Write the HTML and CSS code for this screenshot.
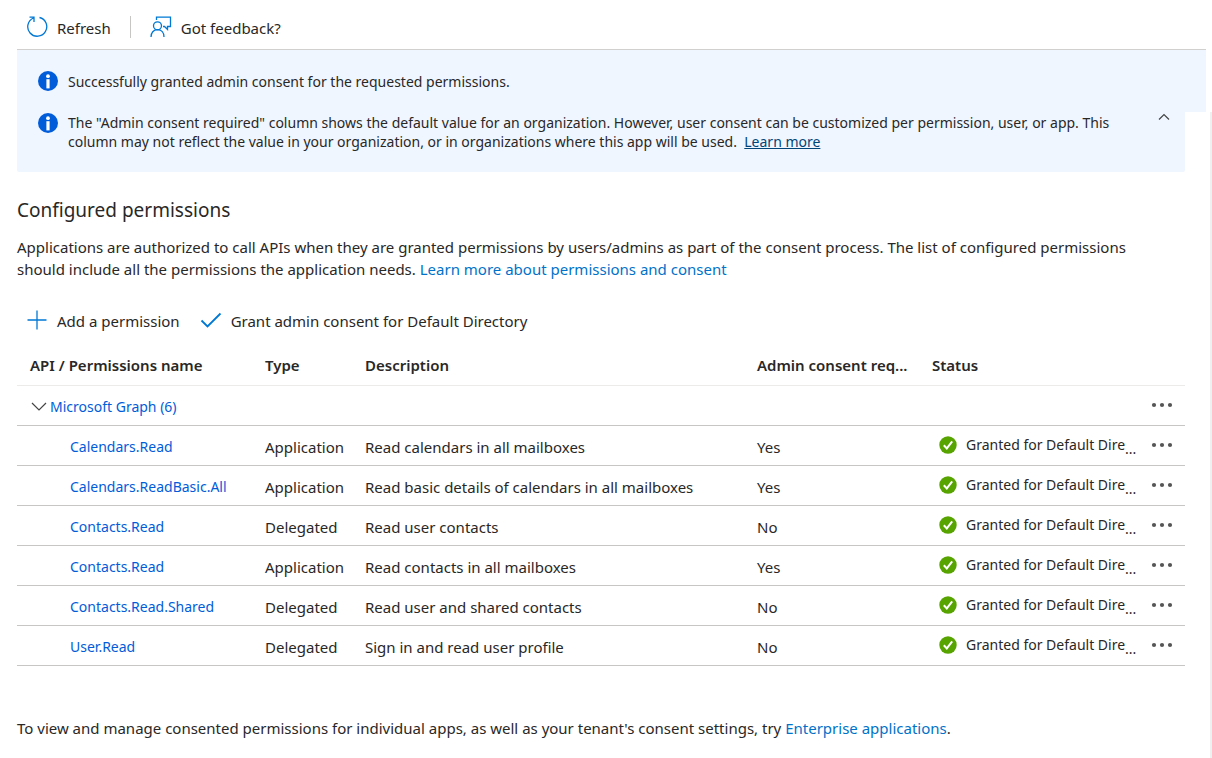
FILE: index.html
```html
<!DOCTYPE html>
<html lang="en">
<head>
  <meta charset="UTF-8">
  <meta name="viewport" content="width=device-width, initial-scale=1.0">
  <title>API permissions</title>
  <link rel="stylesheet" href="styles.css">
</head>
<body>
  <!-- Shared icons -->
  <svg class="sprite" aria-hidden="true">
    <symbol id="icon-info" viewBox="0 0 20 20">
      <circle cx="10" cy="10" r="10" fill="#015cda"/>
      <circle cx="10" cy="5.2" r="1.9" fill="#fff"/>
      <rect x="8.4" y="8.2" width="3.2" height="9.2" fill="#fff"/>
    </symbol>
    <symbol id="icon-ok" viewBox="0 0 18 18">
      <circle cx="9" cy="9" r="8.700" fill="#57a300"/>
      <path d="M4.8 9.2l3 3.2 5.4-7" fill="none" stroke="#fff" stroke-width="2"/>
    </symbol>
    <symbol id="icon-more" viewBox="0 0 22 6">
      <circle cx="3" cy="3" r="2.1" fill="#555"/>
      <circle cx="11" cy="3" r="2.1" fill="#555"/>
      <circle cx="19" cy="3" r="2.1" fill="#555"/>
    </symbol>
  </svg>

  <header class="toolbar">
    <button class="command" type="button">
      <svg class="icon" viewBox="0 0 22 22"><path d="M13.500 1.500A9.500 9.500 0 1 1 7.500 2M3.500 1.200h4.500v4.800" fill="none" stroke="#0078d4" stroke-width="1.3"/></svg>
      <span>Refresh</span>
    </button>
    <span class="divider"></span>
    <button class="command" type="button">
      <svg class="icon" viewBox="0 0 22 22"><path d="M6.5 4V1.2h14v9.3h-3v3l-3-3h-1.5M1 21c0-4.300 2.500-7.300 6.500-7.300s6.500 3 6.500 7.300" fill="none" stroke="#0078d4" stroke-width="1.3"/><circle cx="7.500" cy="9.800" r="4" fill="none" stroke="#0078d4" stroke-width="1.3"/></svg>
      <span>Got feedback?</span>
    </button>
  </header>

  <div class="notice notice-top">
    <svg class="info"><use href="#icon-info"/></svg>
    <p>Successfully granted admin consent for the requested permissions.</p>
  </div>

  <main class="content">
    <div class="notice notice-column">
      <svg class="info"><use href="#icon-info"/></svg>
      <p>The "Admin consent required" column shows the default value for an organization. However, user consent can be customized per permission, user, or app. This column may not reflect the value in your organization, or in organizations where this app will be used. &nbsp;<a href="#">Learn more</a></p>
      <button class="collapse" type="button" aria-label="Collapse">
        <svg width="12" height="8" viewBox="0 0 12 8"><path d="M1 6.500l5-5 5 5" fill="none" stroke="#444" stroke-width="1.200"/></svg>
      </button>
    </div>

    <h2>Configured permissions</h2>
    <p class="intro">Applications are authorized to call APIs when they are granted permissions by users/admins as part of the consent process. The list of configured permissions should include all the permissions the application needs. <a href="#">Learn more about permissions and consent</a></p>

    <div class="actions">
      <button class="command" type="button">
        <svg class="icon" viewBox="0 0 22 22"><path d="M11 1.500v19M1.500 11h19" fill="none" stroke="#0078d4" stroke-width="1.300"/></svg>
        <span>Add a permission</span>
      </button>
      <button class="command" type="button">
        <svg class="icon" viewBox="0 0 22 22"><path d="M1.500 11.500l6 6L20.500 4.500" fill="none" stroke="#0078d4" stroke-width="1.800"/></svg>
        <span>Grant admin consent for Default Directory</span>
      </button>
    </div>

    <table class="permissions">
      <colgroup>
        <col class="col-name">
        <col class="col-type">
        <col>
        <col class="col-admin">
        <col class="col-status">
        <col class="col-more">
      </colgroup>
      <thead>
        <tr>
          <th>API / Permissions name</th>
          <th>Type</th>
          <th>Description</th>
          <th>Admin consent req...</th>
          <th>Status</th>
          <th></th>
        </tr>
      </thead>
      <tbody>
        <tr>
          <td class="api" colspan="5">
            <div><svg width="16" height="10" viewBox="0 0 16 10"><path d="M1 1l7 7 7-7" fill="none" stroke="#444" stroke-width="1.200"/></svg><a href="#">Microsoft Graph (6)</a></div>
          </td>
          <td class="more"><button type="button" aria-label="More"><svg><use href="#icon-more"/></svg></button></td>
        </tr>
        <tr>
          <td class="name"><a href="#">Calendars.Read</a></td>
          <td>Application</td>
          <td>Read calendars in all mailboxes</td>
          <td>Yes</td>
          <td class="status"><div><svg><use href="#icon-ok"/></svg>Granted for Default Dire<span>...</span></div></td>
          <td class="more"><button type="button" aria-label="More"><svg><use href="#icon-more"/></svg></button></td>
        </tr>
        <tr>
          <td class="name"><a href="#">Calendars.ReadBasic.All</a></td>
          <td>Application</td>
          <td>Read basic details of calendars in all mailboxes</td>
          <td>Yes</td>
          <td class="status"><div><svg><use href="#icon-ok"/></svg>Granted for Default Dire<span>...</span></div></td>
          <td class="more"><button type="button" aria-label="More"><svg><use href="#icon-more"/></svg></button></td>
        </tr>
        <tr>
          <td class="name"><a href="#">Contacts.Read</a></td>
          <td>Delegated</td>
          <td>Read user contacts</td>
          <td>No</td>
          <td class="status"><div><svg><use href="#icon-ok"/></svg>Granted for Default Dire<span>...</span></div></td>
          <td class="more"><button type="button" aria-label="More"><svg><use href="#icon-more"/></svg></button></td>
        </tr>
        <tr>
          <td class="name"><a href="#">Contacts.Read</a></td>
          <td>Application</td>
          <td>Read contacts in all mailboxes</td>
          <td>Yes</td>
          <td class="status"><div><svg><use href="#icon-ok"/></svg>Granted for Default Dire<span>...</span></div></td>
          <td class="more"><button type="button" aria-label="More"><svg><use href="#icon-more"/></svg></button></td>
        </tr>
        <tr>
          <td class="name"><a href="#">Contacts.Read.Shared</a></td>
          <td>Delegated</td>
          <td>Read user and shared contacts</td>
          <td>No</td>
          <td class="status"><div><svg><use href="#icon-ok"/></svg>Granted for Default Dire<span>...</span></div></td>
          <td class="more"><button type="button" aria-label="More"><svg><use href="#icon-more"/></svg></button></td>
        </tr>
        <tr>
          <td class="name"><a href="#">User.Read</a></td>
          <td>Delegated</td>
          <td>Sign in and read user profile</td>
          <td>No</td>
          <td class="status"><div><svg><use href="#icon-ok"/></svg>Granted for Default Dire<span>...</span></div></td>
          <td class="more"><button type="button" aria-label="More"><svg><use href="#icon-more"/></svg></button></td>
        </tr>
      </tbody>
    </table>

    <p class="footnote">To view and manage consented permissions for individual apps, as well as your tenant's consent settings, try <a href="#">Enterprise applications</a>.</p>
  </main>
</body>
</html>
```
FILE: styles.css
```css
* {
  box-sizing: border-box;
}
body {
  margin: 0;
  min-height: 100vh;
  display: flex;
  flex-direction: column;
  background-color: #fff;
  color: #292827;
  font-family: "Segoe UI", "Noto Sans", "Open Sans", sans-serif;
  font-size: 15px;
  line-height: 22px;
}
p, h2 {
  margin: 0;
}
a {
  color: #0072c9;
  text-decoration: none;
}
button {
  padding: 0;
  border: none;
  background: none;
  color: inherit;
  font: inherit;
  cursor: pointer;
}
svg {
  display: block;
  flex: none;
}
.sprite {
  position: absolute;
  width: 0;
  height: 0;
}
.toolbar {
  display: flex;
  align-items: center;
  gap: 19px;
  height: 50px;
  margin: 0 6px 0 17px;
  padding: 5px 9px 0;
  border-bottom: 1px solid #d2d0ce;
}
.command {
  display: flex;
  align-items: flex-start;
  gap: 9px;
}
.command span {
  padding-top: 1px;
}
.icon {
  width: 22px;
  height: 22px;
}
.divider {
  width: 1px;
  height: 22px;
  background-color: #c8c6c4;
}
.notice {
  display: flex;
  align-items: flex-start;
  gap: 10px;
  padding-left: 21px;
  background-color: #eff6ff;
  font-size: 14px;
  line-height: 19px;
}
.info {
  width: 20px;
  height: 20px;
}
.notice-top {
  height: 62px;
  margin: 0 6px 0 17px;
  padding-top: 21px;
}
.notice-top p {
  padding-top: 1px;
}
.notice-column {
  padding-top: 1px;
  padding-bottom: 21px;
  padding-right: 15px;
  border-radius: 0 0 2px 2px;
}
.notice-column p {
  flex: 1;
}
.notice-column a {
  color: #004578;
  text-decoration: underline;
}
.collapse {
  height: 8px;
  margin-left: 14px;
}
.content {
  flex: 1;
  padding: 0 25px 0 17px;
  border-right: 2px solid #f0f0f0;
}
h2 {
  margin-top: 25px;
  font-size: 19px;
  font-weight: 400;
  line-height: 26px;
}
.intro {
  margin-top: 13px;
  padding-right: 20px;
}
.actions {
  display: flex;
  gap: 20px;
  margin-top: 29px;
  padding-left: 9px;
}
.permissions {
  width: 100%;
  margin-top: 13px;
  border-collapse: collapse;
  table-layout: fixed;
}
.col-name {
  width: 235px;
}
.col-type {
  width: 100px;
}
.col-admin {
  width: 175px;
}
.col-status {
  width: 208px;
}
.col-more {
  width: 58px;
}
th, td {
  height: 40px;
  padding: 0 0 0 13px;
  border-bottom: 1px solid #c8c6c4;
  text-align: left;
  white-space: nowrap;
}
th {
  border-bottom-color: #edebe9;
  font-weight: 600;
}
td {
  padding-top: 3px;
}
td a {
  color: #015cda;
  font-size: 14px;
}
.api div {
  display: flex;
  align-items: center;
  gap: 3px;
  padding-left: 1px;
}
.name {
  padding-left: 53px;
}
.status div {
  display: flex;
  align-items: center;
  padding: 0 0 4px 7px;
  font-size: 14px;
}
.status svg {
  width: 18px;
  height: 18px;
  margin-right: 9px;
}
.status span {
  padding-top: 8px;
}
.more {
  padding-left: 24px;
}
.more svg {
  width: 22px;
  height: 6px;
}
.more button {
  display: block;
  padding-bottom: 4px;
}
.footnote {
  margin-top: 51px;
}
```
